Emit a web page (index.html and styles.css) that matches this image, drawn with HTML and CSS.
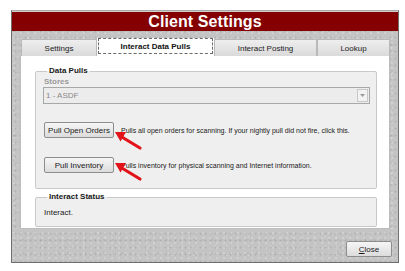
FILE: index.html
```html
<!DOCTYPE html>
<html>
<head>
<meta charset="utf-8">
<link rel="stylesheet" href="styles.css">
</head>
<body>
<div class="window">
  <div class="titlebar">Client Settings</div>
  <div class="wbody">
    <div class="tabs">
      <div class="tab t1">Settings</div>
      <div class="tab t2 active"><span class="focus">Interact Data Pulls</span></div>
      <div class="tab t3">Interact Posting</div>
      <div class="tab t4">Lookup</div>
    </div>
    <div class="panel">
      <fieldset class="group g1">
        <legend>Data Pulls</legend>
        <div class="label">Stores</div>
        <div class="select"><span class="sval">1 - ASDF</span><span class="sarrow"><svg width="5" height="3" viewBox="0 0 5 3"><path d="M0 0H5L2.5 3Z" fill="#9a9a9a"/></svg></span></div>
        <div class="row r1"><button class="btn wide">Pull Open Orders</button><span class="desc">Pulls all open orders for scanning. If your nightly pull did not fire, click this.</span></div>
        <div class="row r2"><button class="btn wide">Pull Inventory</button><span class="desc">Pulls inventory for physical scanning and Internet information.</span></div>
      </fieldset>
      <fieldset class="group g2">
        <legend>Interact Status</legend>
        <div class="status">Interact.</div>
      </fieldset>
    </div>
    <div class="footer"><button class="btn close"><u>C</u>lose</button></div>
  </div>
</div>
<svg class="arrows" width="405" height="271" viewBox="0 0 405 271">
  <line x1="140" y1="148" x2="121" y2="136.5" stroke="#e3131b" stroke-width="3.2" stroke-linecap="round"/>
  <polygon points="115,132 126,132 120.5,141.5" fill="#e3131b"/>
  <line x1="140" y1="179" x2="121" y2="167.5" stroke="#e3131b" stroke-width="3.2" stroke-linecap="round"/>
  <polygon points="115,163 126,163 120.5,172.5" fill="#e3131b"/>
</svg>
</body>
</html>
```

FILE: styles.css
```css
html, body {
  margin: 0;
  padding: 0;
  background: #ffffff;
}
body {
  font-family: "Liberation Sans", Arial, sans-serif;
  width: 405px;
  height: 271px;
  position: relative;
  overflow: hidden;
}
.window {
  margin: 10px 0 0 11px;
  width: 388px;
  height: 253px;
  box-sizing: border-box;
  border: 1px solid #6f6f6f;
  border-top-color: #a9a9a9;
  display: flex;
  flex-direction: column;
  background-color: #c4c4c4;
  background-image:
    radial-gradient(circle at 30% 40%, rgba(255,255,255,0.22) 0.7px, transparent 1.3px),
    radial-gradient(circle at 70% 80%, rgba(110,110,110,0.22) 0.7px, transparent 1.3px),
    radial-gradient(circle at 50% 10%, rgba(255,255,255,0.18) 0.6px, transparent 1.2px),
    radial-gradient(circle at 20% 60%, rgba(120,120,120,0.18) 0.6px, transparent 1.2px);
  background-size: 7px 5px, 5px 7px, 11px 9px, 9px 13px;
}
.titlebar {
  height: 19px;
  border-top: 1px solid #cfcfcf;
  background: #850000;
  color: #ffffff;
  font-weight: bold;
  font-size: 16px;
  line-height: 19px;
  text-align: center;
  letter-spacing: 0.1px;
}
.wbody {
  flex: 1;
  display: flex;
  flex-direction: column;
  padding: 7px 8px 0 8px;
}
.tabs {
  display: flex;
  height: 18px;
  margin-left: 1px;
  font-size: 8px;
  color: #222;
}
.tab {
  box-sizing: border-box;
  height: 17px;
  margin-top: 1px;
  display: flex;
  align-items: center;
  justify-content: center;
  background: linear-gradient(#eeeeee, #dadada);
  border: 1px solid #b9b9b9;
  border-bottom: none;
}
.t1 { width: 76px; }
.t2 { width: 117px; }
.t3 { width: 103px; }
.t4 { width: 73px; }
.tab.active {
  background: #ffffff;
  height: 18px;
  margin-top: 0;
  border: none;
  align-items: flex-start;
  padding: 0 1px;
}
.focus {
  box-sizing: border-box;
  width: 100%;
  height: 16px;
  border: 1px dashed #6a6a6a;
  display: flex;
  align-items: center;
  justify-content: center;
  font-weight: bold;
  color: #111;
}
.panel {
  box-sizing: border-box;
  height: 173px;
  width: 370px;
  background: #ffffff;
  border: 1px solid #bdbdbd;
  border-top: none;
  padding: 10px 12px 0 14px;
  display: flex;
  flex-direction: column;
}
.group {
  margin: 0;
  border: 1px solid #c9c9c9;
  border-radius: 2px;
  background: #efefef;
  padding: 1px 6px 0 8px;
  min-width: 0;
}
.group legend {
  font-size: 8px;
  font-weight: bold;
  color: #1a1a1a;
  line-height: 10px;
  padding: 0 2px;
  margin-left: 3px;
}
.g1 { height: 123px; box-sizing: border-box; }
.g2 { height: 35px; box-sizing: border-box; margin-top: 3px; }
.label {
  font-size: 8px;
  font-weight: bold;
  color: #9a9a9a;
  line-height: 9px;
}
.select {
  box-sizing: border-box;
  margin: 1px 0 0 -1px;
  width: 327px;
  height: 17px;
  border: 1px solid #a8a8a8;
  background: #ececec;
  display: flex;
  align-items: center;
  justify-content: space-between;
  font-size: 8px;
  color: #8a8a8a;
}
.sval { padding-left: 2px; }
.sarrow {
  box-sizing: border-box;
  width: 11px;
  height: 13px;
  margin-right: 1px;
  border: 1px solid #c8c8c8;
  background: #f2f2f2;
  display: flex;
  align-items: center;
  justify-content: center;
}
.row {
  display: flex;
  align-items: center;
  gap: 7px;
}
.r1 { margin-top: 18px; }
.r2 { margin-top: 19px; }
.btn {
  font-family: "Liberation Sans", Arial, sans-serif;
  font-size: 8px;
  color: #1a1a1a;
  box-sizing: border-box;
  height: 16px;
  padding: 0;
  margin: 0;
  border: 1px solid #8d8d8d;
  border-radius: 2px;
  background: linear-gradient(#f6f6f6, #dcdcdc);
}
.btn.wide { width: 70px; }
.desc {
  font-size: 7px;
  color: #1a1a1a;
}
.status {
  font-size: 8px;
  color: #1a1a1a;
  margin-top: 5px;
}
.footer {
  display: flex;
  justify-content: flex-end;
  margin-top: 12px;
  padding-right: 0;
}
.btn.close {
  width: 46px;
  margin-right: -2px;
}
.btn.close u { text-decoration: underline; }
.arrows {
  position: absolute;
  left: 0;
  top: 0;
  pointer-events: none;
}
```
